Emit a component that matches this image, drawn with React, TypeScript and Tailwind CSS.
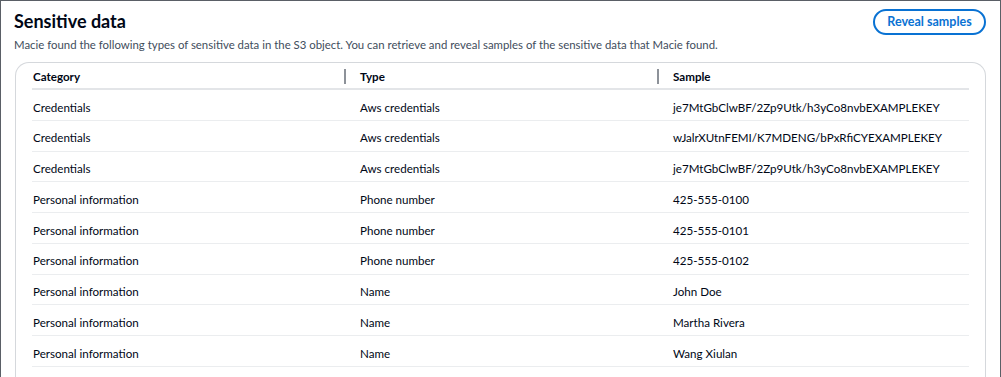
import React from "react";

const rows: [string, string, string][] = [
  ["Credentials", "Aws credentials", "je7MtGbClwBF/2Zp9Utk/h3yCo8nvbEXAMPLEKEY"],
  ["Credentials", "Aws credentials", "wJalrXUtnFEMI/K7MDENG/bPxRfiCYEXAMPLEKEY"],
  ["Credentials", "Aws credentials", "je7MtGbClwBF/2Zp9Utk/h3yCo8nvbEXAMPLEKEY"],
  ["Personal information", "Phone number", "425-555-0100"],
  ["Personal information", "Phone number", "425-555-0101"],
  ["Personal information", "Phone number", "425-555-0102"],
  ["Personal information", "Name", "John Doe"],
  ["Personal information", "Name", "Martha Rivera"],
  ["Personal information", "Name", "Wang Xiulan"],
];

export default function App() {
  return (
    <div
      className="w-[1001px] h-[377px] overflow-hidden bg-white border-x border-t border-[#5a5f66] text-[#000716]"
      style={{ fontFamily: 'Lato, "Open Sans", Arial, sans-serif' }}
    >
      <div className="flex items-start justify-between pl-[13px] pr-[14px] pt-[8px]">
        <div>
          <h2 className="text-[18px] font-bold leading-[24px]">Sensitive data</h2>
          <p className="text-[11.4px] leading-[16px] mt-[4px] text-[#414d5c]">
            Macie found the following types of sensitive data in the S3 object. You can retrieve and reveal samples of the sensitive data that Macie found.
          </p>
        </div>
        <button className="mt-0 h-[26px] w-[113px] rounded-full border-2 border-[#0972d3] text-[#0972d3] text-[12.5px] font-bold leading-none">
          Reveal samples
        </button>
      </div>
      <div className="ml-[14px] mr-[14px] mt-[9px] rounded-t-[14px] border-x border-t border-[#d5d8dc] px-[16px] pb-[10px]">
        <div className="grid grid-cols-[313px_313px_1fr] h-[27px] border-b-2 border-[#e3e5e8] items-center text-[11.6px] font-bold">
          <div className="pl-[1px] pt-[2px]">Category</div>
          <div className="relative pl-[15px] pt-[2px] h-full flex items-center">
            <span className="absolute left-[-1px] top-[6px] w-[2px] h-[15px] bg-[#8d9299]" />
            Type
          </div>
          <div className="relative pl-[15px] pt-[2px] h-full flex items-center">
            <span className="absolute left-[-1px] top-[6px] w-[2px] h-[15px] bg-[#8d9299]" />
            Sample
          </div>
        </div>
        {rows.map((r, i) => (
          <div
            key={i}
            className="grid grid-cols-[313px_313px_1fr] h-[30.75px] border-b border-[#ebedef] items-center text-[11.6px] pt-[5px]"
          >
            <div className="pl-[1px]">{r[0]}</div>
            <div className="pl-[15px]">{r[1]}</div>
            <div className="pl-[15px]">{r[2]}</div>
          </div>
        ))}
      </div>
    </div>
  );
}
